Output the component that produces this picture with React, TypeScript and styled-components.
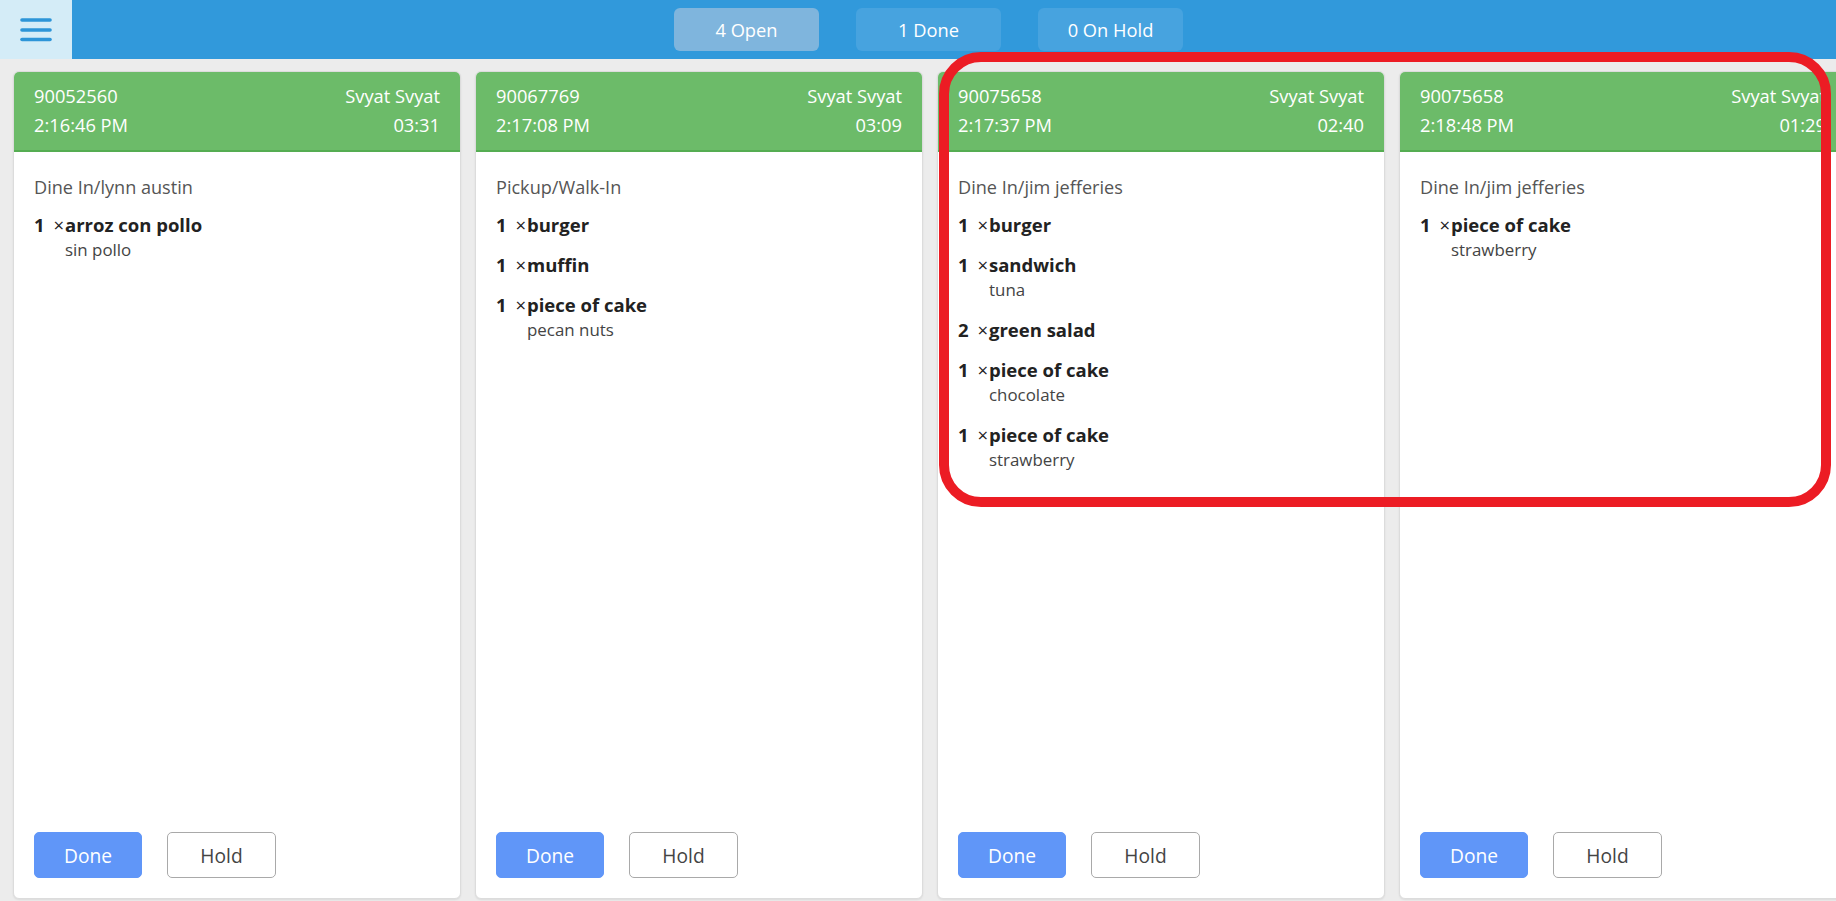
import React from "react";
import styled, { createGlobalStyle } from "styled-components";

const GlobalStyle = createGlobalStyle`
  html, body { margin: 0; padding: 0; }
  body {
    font-family: "Open Sans", "Noto Sans", "Liberation Sans", sans-serif;
    background: #ececec;
    overflow: hidden;
  }
  * { box-sizing: border-box; }
`;

const Page = styled.div`
  position: relative;
  width: 1836px;
  height: 901px;
  display: flex;
  flex-direction: column;
  overflow: hidden;
`;

const TopBar = styled.header`
  height: 59px;
  flex: none;
  display: flex;
  background: #3199db;
`;

const MenuButton = styled.button`
  width: 72px;
  height: 59px;
  border: none;
  padding: 0;
  background: #d4ecf7;
  display: flex;
  align-items: center;
  justify-content: center;
  cursor: pointer;
`;

const Tabs = styled.nav`
  flex: 1;
  display: flex;
  justify-content: center;
  align-items: center;
  gap: 37px;
  padding-right: 51px;
`;

const Tab = styled.button<{ $active?: boolean }>`
  width: 145px;
  height: 43px;
  border: none;
  border-radius: 6px;
  background: ${(p) => (p.$active ? "#7fb5dd" : "#47a3df")};
  color: #fff;
  font-family: inherit;
  font-size: 18.3px;
  cursor: pointer;
`;

const Board = styled.main`
  flex: 1;
  display: flex;
  gap: 14px;
  padding: 12px 0 2px 13px;
  overflow: hidden;
`;

const Card = styled.section`
  flex: none;
  width: 448px;
  display: flex;
  flex-direction: column;
  background: #fff;
  border: 1px solid #dcdcdc;
  border-radius: 6px;
  overflow: hidden;
  box-shadow: 0 1px 2px rgba(0, 0, 0, 0.08);
`;

const CardHeader = styled.div`
  background: #6cbb69;
  border-bottom: 2px solid #55ad52;
  color: #fff;
  padding: 9px 20px 11px 20px;
  display: grid;
  grid-template-columns: 1fr auto;
  font-size: 18.3px;
  line-height: 29px;
`;

const Right = styled.span`
  text-align: right;
`;

const CardBody = styled.div`
  flex: 1;
  display: flex;
  flex-direction: column;
  padding: 22px 20px 20px 20px;
`;

const OrderType = styled.div`
  color: #555;
  font-size: 18.1px;
  line-height: 26px;
  margin-bottom: -3px;
`;

const Item = styled.div`
  margin-top: 15px;
  color: #222;
`;

const ItemLine = styled.div`
  display: flex;
  font-size: 18.5px;
  line-height: 25px;
`;

const Qty = styled.span`
  font-weight: 700;
  width: 31px;
  display: flex;
  justify-content: space-between;
  padding-right: 1px;
`;

const Times = styled.span`
  font-weight: 400;
`;

const Name = styled.span`
  font-weight: 700;
`;

const Modifier = styled.div`
  margin-top: 1px;
  padding-left: 31px;
  color: #444;
  font-size: 16.9px;
  line-height: 24px;
`;

const Actions = styled.div`
  margin-top: auto;
  display: flex;
  gap: 25px;
`;

const ActionButton = styled.button<{ $primary?: boolean }>`
  width: ${(p) => (p.$primary ? "108px" : "109px")};
  height: 46px;
  border-radius: 5px;
  font-family: inherit;
  font-size: 19.2px;
  cursor: pointer;
  border: 1px solid ${(p) => (p.$primary ? "#6096f8" : "#a9a9a9")};
  background: ${(p) => (p.$primary ? "#6096f8" : "#fff")};
  color: ${(p) => (p.$primary ? "#fff" : "#444")};
`;

const Highlight = styled.div`
  position: absolute;
  left: 939px;
  top: 52px;
  width: 892px;
  height: 455px;
  border: 10px solid #ec1c24;
  border-radius: 42px;
  pointer-events: none;
`;

type OrderItem = { qty: number; name: string; mod?: string };
type Order = {
  id: string;
  user: string;
  time: string;
  elapsed: string;
  type: string;
  items: OrderItem[];
};

const orders: Order[] = [
  {
    id: "90052560",
    user: "Svyat Svyat",
    time: "2:16:46 PM",
    elapsed: "03:31",
    type: "Dine In/lynn austin",
    items: [{ qty: 1, name: "arroz con pollo", mod: "sin pollo" }],
  },
  {
    id: "90067769",
    user: "Svyat Svyat",
    time: "2:17:08 PM",
    elapsed: "03:09",
    type: "Pickup/Walk-In",
    items: [
      { qty: 1, name: "burger" },
      { qty: 1, name: "muffin" },
      { qty: 1, name: "piece of cake", mod: "pecan nuts" },
    ],
  },
  {
    id: "90075658",
    user: "Svyat Svyat",
    time: "2:17:37 PM",
    elapsed: "02:40",
    type: "Dine In/jim jefferies",
    items: [
      { qty: 1, name: "burger" },
      { qty: 1, name: "sandwich", mod: "tuna" },
      { qty: 2, name: "green salad" },
      { qty: 1, name: "piece of cake", mod: "chocolate" },
      { qty: 1, name: "piece of cake", mod: "strawberry" },
    ],
  },
  {
    id: "90075658",
    user: "Svyat Svyat",
    time: "2:18:48 PM",
    elapsed: "01:29",
    type: "Dine In/jim jefferies",
    items: [{ qty: 1, name: "piece of cake", mod: "strawberry" }],
  },
];

const MenuIcon = () => (
  <svg width="32" height="26" viewBox="0 0 32 26">
    <g stroke="#2d95d8" strokeWidth="3.6" strokeLinecap="round">
      <line x1="2" y1="3" x2="30" y2="3" />
      <line x1="2" y1="13" x2="30" y2="13" />
      <line x1="2" y1="22.5" x2="30" y2="22.5" />
    </g>
  </svg>
);

export default function App() {
  return (
    <Page>
      <GlobalStyle />
      <TopBar>
        <MenuButton aria-label="menu">
          <MenuIcon />
        </MenuButton>
        <Tabs>
          <Tab $active>4 Open</Tab>
          <Tab>1 Done</Tab>
          <Tab>0 On Hold</Tab>
        </Tabs>
      </TopBar>
      <Board>
        {orders.map((o, i) => (
          <Card key={i}>
            <CardHeader>
              <span>{o.id}</span>
              <Right>{o.user}</Right>
              <span>{o.time}</span>
              <Right>{o.elapsed}</Right>
            </CardHeader>
            <CardBody>
              <OrderType>{o.type}</OrderType>
              {o.items.map((it, j) => (
                <Item key={j}>
                  <ItemLine>
                    <Qty>
                      {it.qty}
                      <Times>×</Times>
                    </Qty>
                    <Name>{it.name}</Name>
                  </ItemLine>
                  {it.mod && <Modifier>{it.mod}</Modifier>}
                </Item>
              ))}
              <Actions>
                <ActionButton $primary>Done</ActionButton>
                <ActionButton>Hold</ActionButton>
              </Actions>
            </CardBody>
          </Card>
        ))}
      </Board>
      <Highlight />
    </Page>
  );
}
